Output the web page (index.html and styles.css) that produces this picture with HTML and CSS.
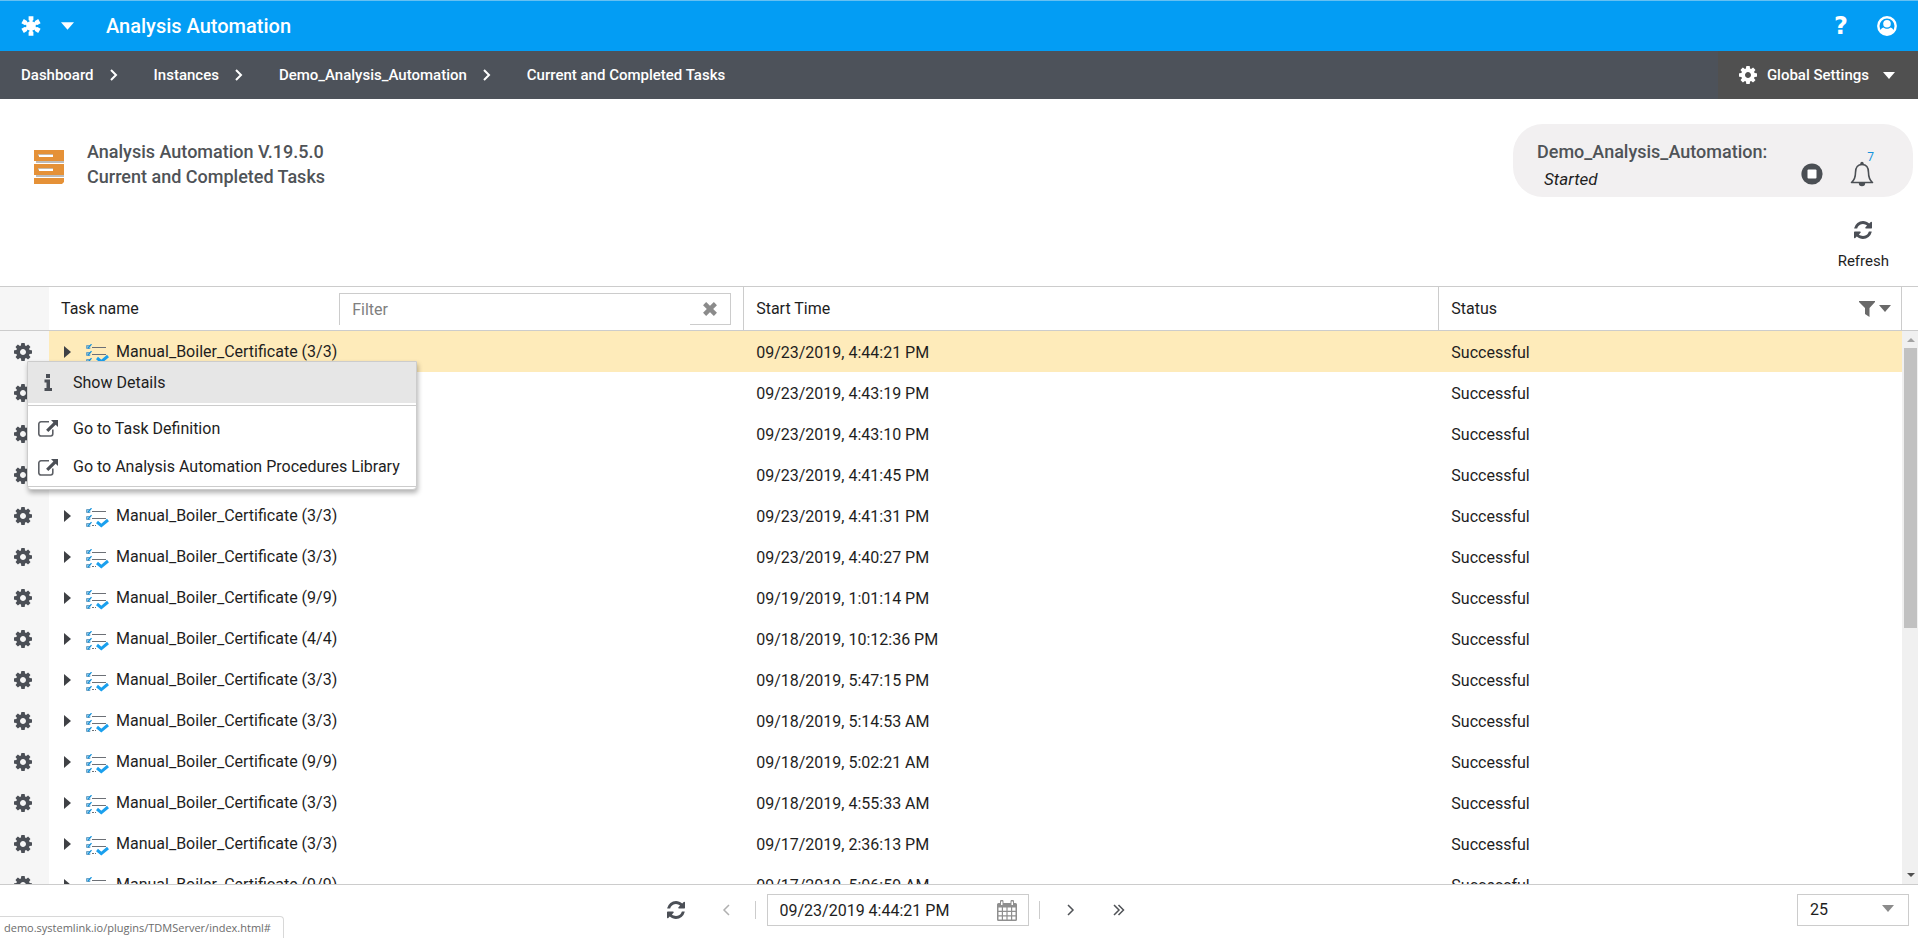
FILE: index.html
```html
<!DOCTYPE html>
<html lang="en">
<head>
<meta charset="utf-8">
<title>Analysis Automation</title>
<link rel="stylesheet" href="styles.css">
</head>
<body>
<svg class="sprite" aria-hidden="true">
  <symbol id="gear" viewBox="0 -128 1536 1536"><path fill="currentColor" d="M1024 640q0-106-75-181t-181-75-181 75-75 181 75 181 181 75 181-75 75-181zm512-109v222q0 12-8 23t-20 13l-185 28q-19 54-39 91 35 50 107 138 10 12 10 25t-9 23q-27 37-99 108t-94 71q-12 0-26-9l-138-108q-44 23-91 38-16 136-29 186-7 28-36 28h-222q-14 0-24.500-8.500t-11.500-21.500l-28-184q-49-16-90-37l-141 107q-10 9-25 9-14 0-25-11-126-114-165-168-7-10-7-23 0-12 8-23 15-21 51-66.500t54-70.500q-27-50-41-99l-183-27q-13-2-21-12.500t-8-23.500v-222q0-12 8-23t19-13l186-28q14-46 39-92-40-57-107-138-10-12-10-24 0-10 9-23 26-36 98.500-107.500t94.500-71.500q13 0 26 10l138 107q44-23 91-38 16-136 29-186 7-28 36-28h222q14 0 24.500 8.500t11.500 21.500l28 184q49 16 90 37l142-107q9-9 24-9 13 0 25 10 129 119 165 170 7 8 7 22 0 12-8 23-15 21-51 66.500t-54 70.500q26 50 41 98l183 28q13 2 21 12.500t8 23.500z"/></symbol>
  <symbol id="refresh" viewBox="128 128 1536 1536"><path fill="currentColor" d="M1639 1056q0 5-1 7-64 268-268 434.500t-478 166.500q-146 0-282.500-55t-243.500-157l-129 129q-19 19-45 19t-45-19-19-45v-448q0-26 19-45t45-19h448q26 0 45 19t19 45-19 45l-137 137q71 66 161 102t187 36q134 0 250-65t186-179q11-17 53-117 8-23 30-23h192q13 0 22.500 9.500t9.500 22.500zm25-800v448q0 26-19 45t-45 19h-448q-26 0-45-19t-19-45 19-45l138-138q-148-137-349-137-134 0-250 65t-186 179q-11 17-53 117-8 23-30 23h-199q-13 0-22.500-9.500t-9.500-22.500v-7q65-268 270-434.500t480-166.500q146 0 284 55.500t245 156.500l130-129q19-19 45-19t45 19 19 45z"/></symbol>
  <symbol id="caret" viewBox="0 0 12 7"><path fill="currentColor" d="M0 0h12L6 7z"/></symbol>
  <symbol id="chevron" viewBox="0 0 8 12"><path fill="none" stroke="currentColor" stroke-width="2" d="M1 1l5 5-5 5"/></symbol>
  <symbol id="expand" viewBox="0 0 7 12"><path fill="#3f4145" d="M0 0l7 6-7 6z"/></symbol>
  <symbol id="task" viewBox="0 0 23 20">
    <path stroke="#6c7076" stroke-width="1" d="M6 3.500h14M6 10.500h14M6 17.500h2M9 17.500h1"/>
    <path fill="none" stroke="#6fa3c4" stroke-width="1" d="M4 1.500H.5v3h3.500v-1M4 8.500H.5v3h3.500v-1M4 15.500H.5v3h3.500v-1"/>
    <path fill="none" stroke="#1593dd" stroke-width="1.300" d="M1.500 2.500l1 1.200L5.500.2M1.500 9.500l1 1.200 3-3.500M1.500 16.500l1 1.200 3-3.500"/>
    <path fill="none" stroke="#1aa0ee" stroke-width="3" d="M11 14l4.300 3.600 6.700-5.600"/>
  </symbol>
  <symbol id="goto" viewBox="0 0 20 17">
    <path fill="none" stroke="#5d6066" stroke-width="1.600" d="M11 1.800H3a2.200 2.200 0 0 0-2.200 2.200v9.800A2.200 2.200 0 0 0 3 16h9.600a2.200 2.200 0 0 0 2.200-2.200V9.500"/>
    <path fill="#4b4f56" d="M13 0h7v7l-2.300-2.300-7.400 7.300-2.200-2.200 7.300-7.400z"/>
  </symbol>
</svg>

<header class="topbar">
  <button class="plain logo" type="button" aria-label="Applications">
    <svg width="20" height="20" viewBox="0 0 20 20"><g fill="#fff"><path id="arm" d="M7.600.3h4.800v3.700l-1.100 1v10l1.100 1v3.700H7.600V16l1.100-1V5l-1.100-1z"/><use href="#arm" transform="rotate(60 10 10)"/><use href="#arm" transform="rotate(120 10 10)"/><circle cx="10" cy="10" r="4.800"/></g></svg>
    <svg width="13" height="8"><use href="#caret"/></svg>
  </button>
  <h1>Analysis Automation</h1>
  <button class="plain help" type="button" aria-label="Help">?</button>
  <button class="plain user" type="button" aria-label="Account">
    <svg width="20" height="20" viewBox="0 0 20 20"><circle cx="10" cy="10" r="8.700" fill="none" stroke="#fff" stroke-width="2.400"/><circle cx="10" cy="7.800" r="3.800" fill="#fff"/><path fill="#fff" d="M3.200 15.500c.4-2.400 1.600-3.500 3.200-4 2 1.700 5.200 1.700 7.200 0 1.600.5 2.800 1.600 3.200 4C13.500 19.800 6.500 19.800 3.200 15.500z"/></svg>
  </button>
</header>

<nav class="crumbs" aria-label="Breadcrumb">
  <a href="#">Dashboard</a><svg width="8" height="12"><use href="#chevron"/></svg>
  <a href="#">Instances</a><svg width="8" height="12"><use href="#chevron"/></svg>
  <a href="#">Demo_Analysis_Automation</a><svg width="8" height="12"><use href="#chevron"/></svg>
  <a href="#">Current and Completed Tasks</a>
  <button class="plain settings" type="button"><svg width="18" height="18"><use href="#gear"/></svg><span>Global Settings</span><svg width="12" height="7"><use href="#caret"/></svg></button>
</nav>

<section class="intro">
  <svg class="cabinet" width="30" height="34" viewBox="0 0 30 34"><path fill="#bdbcbb" d="M2 11h28v2H2zM2 25h28v2H2z"/><path fill="#e59137" d="M0 0h30v11H0zM0 14h30v11H0zM0 28h30v4l-2 2H0z"/><path fill="#c8b9a7" d="M4 4h15v2H4zM4 18h15v2H4z"/><path fill="#fff" d="M5 5h14v2H5zM5 19h14v2H5z"/></svg>
  <h2>Analysis Automation V.19.5.0<br>Current and Completed Tasks</h2>
  <div class="side">
    <div class="pill">
      <div class="state"><strong>Demo_Analysis_Automation:</strong><em>Started</em></div>
      <button class="plain stop" type="button" aria-label="Stop"><svg width="22" height="22" viewBox="0 0 22 22"><circle cx="11" cy="11" r="10.600" fill="#4b4f54"/><rect x="6.500" y="6.500" width="9" height="9" rx="1" fill="#fff"/></svg></button>
      <button class="plain bell" type="button" aria-label="Notifications"><svg width="24" height="26" viewBox="0 0 24 26"><path fill="none" stroke="#4b4f54" stroke-width="1.600" stroke-linejoin="round" d="M1.500 21.500c3-2.500 4-5 4-10C5.500 6 8 3.500 12 3.500s6.500 2.500 6.500 8c0 5 1 7.500 4 10z"/><circle cx="12" cy="2.500" r="1.700" fill="#4b4f54"/><path fill="#4b4f54" d="M8.800 22h6.400a3.200 3.200 0 0 1-6.400 0z"/></svg><span class="count">7</span></button>
    </div>
    <button class="plain reload" type="button"><svg width="18" height="18"><use href="#refresh"/></svg><span>Refresh</span></button>
  </div>
</section>

<main class="grid">
  <div class="view">
    <table>
      <colgroup><col class="c-gear"><col class="c-wide"><col class="c-wide"><col></colgroup>
      <thead>
        <tr>
          <th class="gear"></th>
          <th><div class="namehead"><label for="filter">Task name</label><div class="filter"><input id="filter" type="text" placeholder="Filter"><button class="plain" type="button" aria-label="Clear filter"><svg width="14" height="14" viewBox="0 0 14 14"><path stroke="#8b8b8b" stroke-width="4.400" d="M1.600 1.600l10.800 10.800M12.400 1.600L1.600 12.400"/></svg></button></div></div></th>
          <th>Start Time</th>
          <th class="status"><div class="statushead"><span>Status</span><button class="plain" type="button" aria-label="Filter status"><svg width="16" height="16" viewBox="0 0 16 16"><path fill="#696969" d="M0 0h16v1l-5.500 6v9L6 13V7L0 1z"/></svg><svg class="dim" width="12" height="7"><use href="#caret"/></svg></button></div></th>
        </tr>
      </thead>
      <tbody>
        <tr class="selected"><td class="gear"><svg width="18" height="18"><use href="#gear"/></svg></td><td><div class="name"><svg width="7" height="12"><use href="#expand"/></svg><svg width="23" height="20"><use href="#task"/></svg>Manual_Boiler_Certificate (3/3)</div></td><td>09/23/2019, 4:44:21 PM</td><td>Successful</td></tr>
        <tr><td class="gear"><svg width="18" height="18"><use href="#gear"/></svg></td><td></td><td>09/23/2019, 4:43:19 PM</td><td>Successful</td></tr>
        <tr><td class="gear"><svg width="18" height="18"><use href="#gear"/></svg></td><td></td><td>09/23/2019, 4:43:10 PM</td><td>Successful</td></tr>
        <tr><td class="gear"><svg width="18" height="18"><use href="#gear"/></svg></td><td></td><td>09/23/2019, 4:41:45 PM</td><td>Successful</td></tr>
        <tr><td class="gear"><svg width="18" height="18"><use href="#gear"/></svg></td><td><div class="name"><svg width="7" height="12"><use href="#expand"/></svg><svg width="23" height="20"><use href="#task"/></svg>Manual_Boiler_Certificate (3/3)</div></td><td>09/23/2019, 4:41:31 PM</td><td>Successful</td></tr>
        <tr><td class="gear"><svg width="18" height="18"><use href="#gear"/></svg></td><td><div class="name"><svg width="7" height="12"><use href="#expand"/></svg><svg width="23" height="20"><use href="#task"/></svg>Manual_Boiler_Certificate (3/3)</div></td><td>09/23/2019, 4:40:27 PM</td><td>Successful</td></tr>
        <tr><td class="gear"><svg width="18" height="18"><use href="#gear"/></svg></td><td><div class="name"><svg width="7" height="12"><use href="#expand"/></svg><svg width="23" height="20"><use href="#task"/></svg>Manual_Boiler_Certificate (9/9)</div></td><td>09/19/2019, 1:01:14 PM</td><td>Successful</td></tr>
        <tr><td class="gear"><svg width="18" height="18"><use href="#gear"/></svg></td><td><div class="name"><svg width="7" height="12"><use href="#expand"/></svg><svg width="23" height="20"><use href="#task"/></svg>Manual_Boiler_Certificate (4/4)</div></td><td>09/18/2019, 10:12:36 PM</td><td>Successful</td></tr>
        <tr><td class="gear"><svg width="18" height="18"><use href="#gear"/></svg></td><td><div class="name"><svg width="7" height="12"><use href="#expand"/></svg><svg width="23" height="20"><use href="#task"/></svg>Manual_Boiler_Certificate (3/3)</div></td><td>09/18/2019, 5:47:15 PM</td><td>Successful</td></tr>
        <tr><td class="gear"><svg width="18" height="18"><use href="#gear"/></svg></td><td><div class="name"><svg width="7" height="12"><use href="#expand"/></svg><svg width="23" height="20"><use href="#task"/></svg>Manual_Boiler_Certificate (3/3)</div></td><td>09/18/2019, 5:14:53 AM</td><td>Successful</td></tr>
        <tr><td class="gear"><svg width="18" height="18"><use href="#gear"/></svg></td><td><div class="name"><svg width="7" height="12"><use href="#expand"/></svg><svg width="23" height="20"><use href="#task"/></svg>Manual_Boiler_Certificate (9/9)</div></td><td>09/18/2019, 5:02:21 AM</td><td>Successful</td></tr>
        <tr><td class="gear"><svg width="18" height="18"><use href="#gear"/></svg></td><td><div class="name"><svg width="7" height="12"><use href="#expand"/></svg><svg width="23" height="20"><use href="#task"/></svg>Manual_Boiler_Certificate (3/3)</div></td><td>09/18/2019, 4:55:33 AM</td><td>Successful</td></tr>
        <tr><td class="gear"><svg width="18" height="18"><use href="#gear"/></svg></td><td><div class="name"><svg width="7" height="12"><use href="#expand"/></svg><svg width="23" height="20"><use href="#task"/></svg>Manual_Boiler_Certificate (3/3)</div></td><td>09/17/2019, 2:36:13 PM</td><td>Successful</td></tr>
        <tr><td class="gear"><svg width="18" height="18"><use href="#gear"/></svg></td><td><div class="name"><svg width="7" height="12"><use href="#expand"/></svg><svg width="23" height="20"><use href="#task"/></svg>Manual_Boiler_Certificate (9/9)</div></td><td>09/17/2019, 5:06:59 AM</td><td>Successful</td></tr>
      </tbody>
    </table>
  </div>
  <div class="rail">
    <div class="corner"></div>
    <div class="track">
      <svg class="up" width="8" height="4" viewBox="0 0 8 4"><path fill="#a3a3a3" d="M0 4l4-4 4 4z"/></svg>
      <div class="thumb"></div>
      <svg class="down" width="8" height="4" viewBox="0 0 8 4"><path fill="#505050" d="M0 0l4 4 4-4z"/></svg>
    </div>
  </div>
  <div class="menu" role="menu">
    <button class="plain item active" type="button" role="menuitem"><svg width="20" height="17" viewBox="0 0 20 17"><path fill="#4b4f56" d="M8 0h4v4H8zM6.500 5.500H12V14h2v3H6.500v-3h2V8.500h-2z"/></svg>Show Details</button>
    <a class="item" href="#" role="menuitem"><svg width="20" height="17"><use href="#goto"/></svg>Go to Task Definition</a>
    <a class="item" href="#" role="menuitem"><svg width="20" height="17"><use href="#goto"/></svg>Go to Analysis Automation Procedures Library</a>
  </div>
</main>

<footer class="pager">
  <div class="controls">
    <button class="plain" type="button" aria-label="Reload"><svg width="18" height="18"><use href="#refresh"/></svg></button>
    <button class="plain step" type="button" aria-label="Previous"><svg width="8" height="12" viewBox="0 0 8 12"><path fill="none" stroke="#b0b0b0" stroke-width="1.500" d="M7 1L2 6l5 5"/></svg></button>
    <div class="date"><input type="text" value="09/23/2019 4:44:21 PM" aria-label="Date"><svg width="20" height="21" viewBox="0 0 20 21"><path fill="#8f8f8f" d="M1.500 3H3V1.500a1.500 1.500 0 0 1 3.500 0V3h7V1.500a1.500 1.500 0 0 1 3.500 0V3h1.500Q20 3 20 4.500v15q0 1.500-1.500 1.500h-17Q0 21 0 19.500v-15Q0 3 1.500 3z"/><path fill="#fff" d="M4 1.500h1.500v3.500H4zM14.500 1.500H16v3.500h-1.500zM1.500 7.500h3.300v3.300H1.500zM6 7.500h3.400v3.300H6zM10.600 7.500H14v3.300h-3.400zM15.200 7.500h3.300v3.300h-3.300zM1.500 12h3.300v3.300H1.500zM6 12h3.400v3.300H6zM10.600 12H14v3.300h-3.400zM15.200 12h3.300v3.300h-3.300zM1.500 16.500h3.300v3H1.500zM6 16.500h3.400v3H6zM10.600 16.500H14v3h-3.400zM15.200 16.500h3.300v3h-3.300z"/></svg></div>
    <button class="plain step" type="button" aria-label="Next"><svg width="8" height="12" viewBox="0 0 8 12"><path fill="none" stroke="#505357" stroke-width="1.500" d="M1 1l5 5-5 5"/></svg></button>
    <button class="plain" type="button" aria-label="Last"><svg width="12" height="12" viewBox="0 0 12 12"><path fill="none" stroke="#505357" stroke-width="1.500" d="M1 1l5 5-5 5M5.500 1l5 5-5 5"/></svg></button>
  </div>
  <div class="size"><select aria-label="Rows per page"><option>25</option></select><svg width="12" height="7"><use href="#caret"/></svg></div>
  <div class="link">demo.systemlink.io/plugins/TDMServer/index.html#</div>
</footer>
</body>
</html>
```
FILE: styles.css
```css
* { box-sizing: border-box; }
body {
  margin: 0;
  height: 100vh;
  display: flex;
  flex-direction: column;
  overflow: hidden;
  background: #fff;
  color: #1e1e1e;
  font: 400 16px/20px Roboto, "Liberation Sans", sans-serif;
}
.sprite { position: absolute; width: 0; height: 0; }
svg { display: block; flex: none; }
h1, h2 { margin: 0; font-weight: 500; }
a { color: inherit; text-decoration: none; }
.plain { border: 0; padding: 0; background: none; color: inherit; font: inherit; display: flex; align-items: center; }
input, select { font: inherit; color: inherit; min-width: 0; outline: 0; border-radius: 0; background: #fff; }

.topbar {
  height: 51px;
  flex: none;
  display: flex;
  align-items: center;
  padding: 0 21px;
  border-top: 1px solid #66c0f2;
  background: #039df4;
  color: #fff;
}
.logo { gap: 20px; }
.topbar h1 { margin: 0 auto 0 32px; font-size: 20px; line-height: 24px; }
.help { font: bold 24px/24px "DejaVu Sans", sans-serif; margin-right: 29px; }

.crumbs {
  height: 48px;
  flex: none;
  display: flex;
  align-items: center;
  padding-left: 21px;
  background: #4d525a;
  color: #fff;
  font-size: 15px;
  font-weight: 500;
}
.crumbs > svg { margin: 0 36px 0 16px; }
.settings { margin-left: auto; height: 100%; padding: 0 23px 0 21px; background: #505050; }
.settings span { margin: 0 14px 0 10px; }

.intro { flex: none; display: flex; align-items: flex-start; height: 187px; padding: 25px 5px 0 34px; }
.cabinet { margin: 26px 23px 0 0; }
.intro h2 { margin-top: 15px; font-size: 18px; line-height: 25px; color: #4f5357; }
.side { margin-left: auto; display: flex; flex-direction: column; align-items: flex-end; }
.pill { display: flex; width: 400px; height: 73px; padding: 15px 39px 0 24px; border-radius: 30px; background: #f2f0f1; }
.state { margin-right: auto; display: flex; flex-direction: column; }
.state strong { font-size: 18px; line-height: 25px; font-weight: 500; color: #4f5357; }
.state em { margin-left: 7px; font-size: 17px; line-height: 30px; }
.stop { height: 22px; margin: 24px 27px 0 0; }
.bell { position: relative; height: 26px; margin-top: 22px; }
.count { position: absolute; right: 0; top: -14px; font-size: 12px; color: #1593dd; }
.reload { flex-direction: column; gap: 12px; margin: 24px 24px 0 0; font-size: 15px; }
.reload svg, .gear svg, .controls svg { color: #4b4f56; }

.grid { position: relative; flex: 1; min-height: 0; display: flex; border-top: 1px solid #ccc; }
.view { flex: 1; min-width: 0; overflow: hidden; }
table { width: 100%; table-layout: fixed; border-collapse: separate; border-spacing: 0; }
.c-gear { width: 49px; }
.c-wide { width: 36.55%; }
th { height: 44px; padding: 0 12px; border-bottom: 1px solid #ccc; border-right: 1px solid #ccc; text-align: left; font-weight: 400; }
td { height: 41px; padding: 2px 12px 0; white-space: nowrap; }
th.gear { border-right: 0; }
.gear { padding: 0 14px; background: #f6f6f6; }
.selected td:not(.gear) { background: #feebba; }
.namehead { display: flex; align-items: center; justify-content: space-between; }
.filter { display: flex; width: 392px; height: 32px; }
.filter input { flex: 1; padding: 2px 12px 0; border: solid #ccc; border-width: 1px 0 0 1px; }
.filter input::placeholder { color: #808080; opacity: 1; }
.filter button { width: 41px; padding-left: 13px; border: solid #ccc; border-width: 1px 1px 1px 0; }
th.status { padding-right: 10px; }
.statushead { display: flex; justify-content: space-between; }
.statushead button { gap: 4px; }
.dim { color: #696969; }
.name { display: flex; align-items: center; margin: -2px 0 0 3px; }
.name svg:first-child { margin-right: 15px; }
.name svg + svg { margin: 4px 7px 0 0; }

.rail { width: 16px; flex: none; display: flex; flex-direction: column; }
.corner { height: 44px; border-bottom: 1px solid #ccc; }
.track { flex: 1; min-height: 0; padding: 7px 1px 7px 2px; display: flex; flex-direction: column; align-items: center; background: #f0f0f0; }
.thumb { width: 100%; height: 52%; margin-top: 6px; background: #c1c1c1; }
.down { margin-top: auto; }

.menu {
  position: absolute;
  left: 27px;
  top: 74px;
  width: 390px;
  padding-bottom: 2px;
  border: 1px solid #ccc;
  border-radius: 0 0 4px 4px;
  background: #fff;
  box-shadow: 1px 3px 5px rgba(0, 0, 0, .3);
}
.item { display: flex; align-items: center; gap: 15px; width: 100%; height: 39px; padding-left: 10px; white-space: nowrap; }
.item.active { height: 41px; margin-bottom: 6px; background: #e6e6e6; box-shadow: 0 2px #fff, 0 3px #ccc; }
.item:last-child { border-bottom: 1px solid #ccc; }

.pager { position: relative; flex: none; height: 54px; display: flex; padding: 9px 9px 0 0; border-top: 1px solid #ccc; }
.controls { flex: 1; display: flex; align-items: center; justify-content: center; height: 32px; padding-right: 6px; }
.step { width: 34px; height: 18px; justify-content: center; }
.controls .step:nth-child(2) { width: 59px; margin: 0 11px 0 12px; padding-right: 0; border-right: 1px solid #ccc; }
.controls .step:nth-child(4) { width: 64px; margin: 0 10px 0 10px; border-left: 1px solid #ccc; }
.date { display: flex; align-items: center; width: 262px; height: 32px; padding-right: 11px; border: 1px solid #ccc; }
.date input { flex: 1; height: 28px; padding: 0 0 0 12px; border: 0; }
.size { position: relative; width: 112px; height: 32px; }
.size select { width: 100%; height: 100%; padding: 0 12px; border: 1px solid #ccc; appearance: none; }
.size svg { position: absolute; right: 15px; top: 11px; color: #8b8b8b; pointer-events: none; }
.link {
  position: absolute;
  left: 0;
  bottom: 0;
  height: 22px;
  padding: 0 12px 0 4px;
  border: solid #d8d8d8;
  border-width: 1px 1px 0 0;
  border-radius: 0 4px 0 0;
  background: #fff;
  color: #6b6b6b;
  font: 11px/22px "Open Sans", sans-serif;
}
```
